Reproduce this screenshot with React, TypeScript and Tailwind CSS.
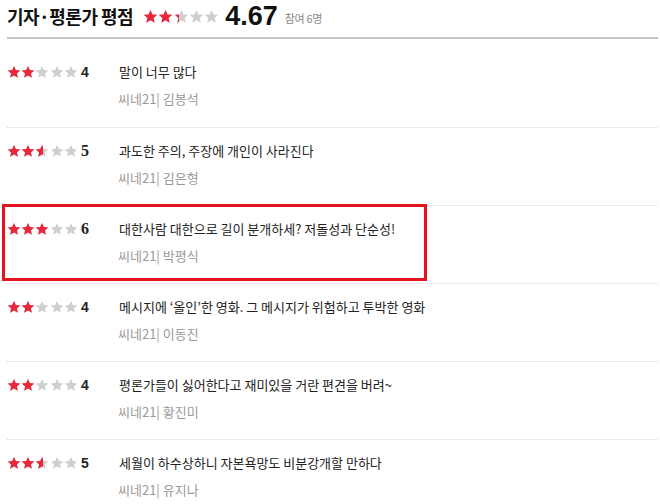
import React from "react";

const KR = { fontFamily: '"Noto Sans CJK KR", "Noto Sans", sans-serif' };

function Star({ size, fill }: { size: number; fill: string }) {
  return (
    <svg width={size} height={size} viewBox="0 0 24 24" className="block">
      <polygon
        points="12,1.5 15.1,8.6 22.8,9.3 17,14.4 18.7,22 12,18 5.3,22 7,14.4 1.2,9.3 8.9,8.6"
        fill={fill}
      />
    </svg>
  );
}

function Stars({ value, size, pitch }: { value: number; size: number; pitch: number }) {
  const pct = Math.max(0, Math.min(100, value * 10));
  const total = pitch * 5;
  return (
    <div className="relative shrink-0" style={{ width: total, height: size }}>
      <div className="absolute inset-0 flex">
        {[0, 1, 2, 3, 4].map((i) => (
          <div key={i} className="flex justify-center" style={{ width: pitch }}>
            <Star size={size} fill="#cfcfcf" />
          </div>
        ))}
      </div>
      <div className="absolute inset-y-0 left-0 overflow-hidden flex" style={{ width: (total * pct) / 100 }}>
        {[0, 1, 2, 3, 4].map((i) => (
          <div key={i} className="flex justify-center shrink-0" style={{ width: pitch }}>
            <Star size={size} fill="#e8283a" />
          </div>
        ))}
      </div>
    </div>
  );
}

const reviews = [
  { score: 4, serif: false, text: "말이 너무 많다", author: "김봉석" },
  { score: 5, serif: true, text: "과도한 주의, 주장에 개인이 사라진다", author: "김은형" },
  { score: 6, serif: true, text: "대한사람 대한으로 길이 분개하세? 저돌성과 단순성!", author: "박평식", boxed: true },
  { score: 4, serif: false, text: "메시지에 ‘올인’한 영화. 그 메시지가 위험하고 투박한 영화", author: "이동진" },
  { score: 4, serif: false, text: "평론가들이 싫어한다고 재미있을 거란 편견을 버려~", author: "황진미" },
  { score: 5, serif: false, text: "세월이 하수상하니 자본욕망도 비분강개할 만하다", author: "유지나" },
];

export default function App() {
  return (
    <div className="w-[660px] h-[504px] bg-white overflow-hidden" style={KR}>
      <div className="ml-[7px] w-[651px]">
        <div className="flex items-center h-[39px] pb-[6px] border-b-2 border-[#c6c6c6]">
          <span className="text-[18px] font-bold text-[#111] tracking-[-0.5px] leading-[22px]">기자·평론가 평점</span>
          <div className="ml-[10px] mt-[1px]">
            <Stars value={4.67} size={15} pitch={15.2} />
          </div>
          <span
            className="ml-[6px] text-[27px] font-bold text-[#111] leading-[26px]"
            style={{ fontFamily: '"Liberation Sans", Arial, sans-serif' }}
          >
            4.67
          </span>
          <span className="ml-[7px] mt-[5px] text-[11px] text-[#888] tracking-[-0.3px] leading-[14px]">참여 6명</span>
        </div>
        <ul className="mt-[10px]">
          {reviews.map((r, i) => (
            <li
              key={i}
              className={
                "relative h-[78px] pt-[13px] " +
                (i > 0 ? "border-t border-dotted border-[#d6d6d6]" : "")
              }
            >
              {r.boxed && (
                <div className="absolute top-[-2px] left-[-5px] w-[425px] h-[77px] border-[3px] border-[#e3141f]" />
              )}
              <div className="flex items-center h-[20px]">
                <Stars value={r.score} size={14} pitch={14.2} />
                <span
                  className="ml-[3px] w-[30px] text-[14px] font-bold text-[#222] leading-[20px]"
                  style={{
                    fontFamily: r.serif
                      ? '"Liberation Serif", "Times New Roman", serif'
                      : '"Liberation Sans", Arial, sans-serif',
                    fontSize: r.serif ? 16 : 14,
                  }}
                >
                  {r.score}
                </span>
                <span className="ml-[8px] text-[13px] text-[#222] leading-[20px]">{r.text}</span>
              </div>
              <div className="pl-[111px] mt-[7px] h-[20px] text-[13px] text-[#9a9a9a] leading-[20px]">
                씨네21| {r.author}
              </div>
            </li>
          ))}
        </ul>
      </div>
    </div>
  );
}
